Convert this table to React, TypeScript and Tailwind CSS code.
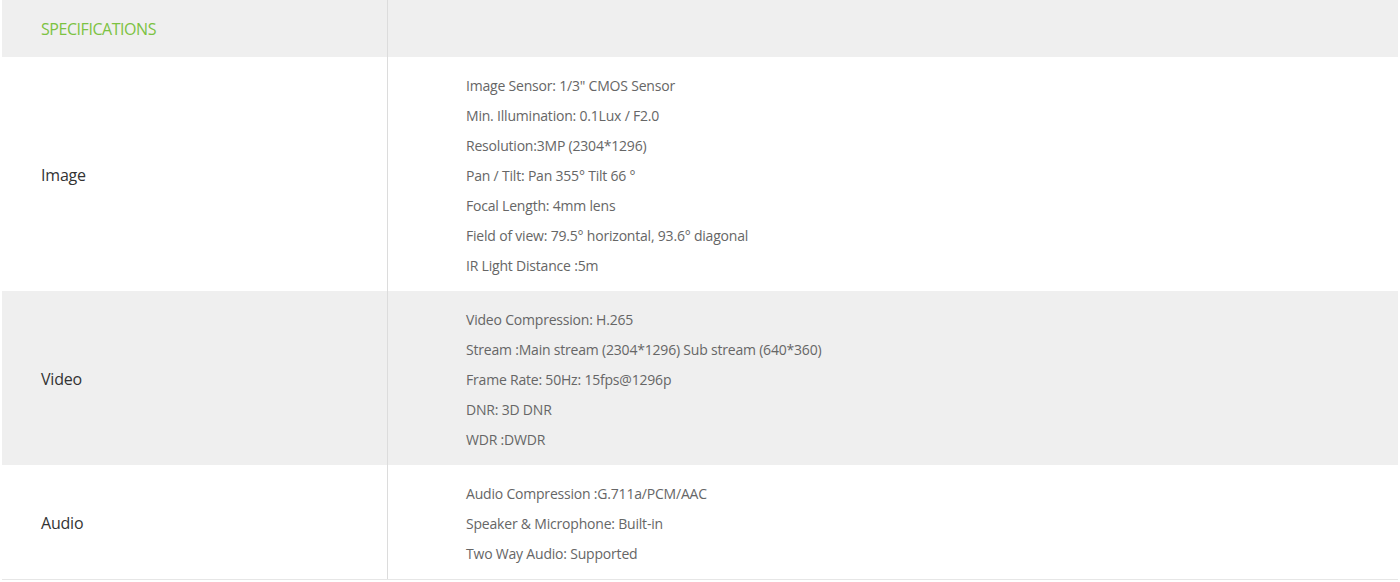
import React from 'react';

interface ISpecRow {
  label: string;
  items: string[];
  shaded: boolean;
}

const rows: ISpecRow[] = [
  {
    label: 'Image',
    shaded: false,
    items: [
      'Image Sensor: 1/3" CMOS Sensor',
      'Min. Illumination: 0.1Lux / F2.0',
      'Resolution:3MP (2304*1296)',
      'Pan / Tilt: Pan 355° Tilt 66 °',
      'Focal Length: 4mm lens',
      'Field of view: 79.5° horizontal, 93.6° diagonal',
      'IR Light Distance :5m',
    ],
  },
  {
    label: 'Video',
    shaded: true,
    items: [
      'Video Compression: H.265',
      'Stream :Main stream (2304*1296) Sub stream (640*360)',
      'Frame Rate: 50Hz: 15fps@1296p',
      'DNR: 3D DNR',
      'WDR :DWDR',
    ],
  },
  {
    label: 'Audio',
    shaded: false,
    items: ['Audio Compression :G.711a/PCM/AAC', 'Speaker & Microphone: Built-in', 'Two Way Audio: Supported'],
  },
];

const App: React.FC = () => {
  return (
    <main
      className="w-[1400px] h-[582px] bg-white pl-[2px] pr-[2px]"
      style={{ fontFamily: '"Open Sans", "Noto Sans", sans-serif' }}
    >
      <section className="w-full border-b border-b-[#e6e6e6]">
        {/* header */}
        <div className="flex h-[57px] bg-[#efefef]">
          <div className="w-[386px] flex items-center pl-[39px] border-r border-r-[#dcdcdc]">
            <span className="text-[16px] tracking-[-0.45px] text-[#7cc242]">SPECIFICATIONS</span>
          </div>
          <div className="flex-1"></div>
        </div>
        {rows.map((row) => (
          <div key={row.label} className={`flex ${row.shaded ? 'bg-[#efefef]' : 'bg-white'}`}>
            <div className="w-[386px] flex items-center pl-[39px] pt-[1px] border-r border-r-[#dcdcdc]">
              <span className="text-[16px] tracking-[-0.2px] text-[#333333]">{row.label}</span>
            </div>
            <ul className="flex-1 pt-[14px] pb-[10px] pl-[78px]">
              {row.items.map((item, index) => (
                <li key={`${row.label}-${index}`} className="h-[30px] leading-[30px] text-[14px] tracking-[-0.2px] text-[#666666]">
                  {item}
                </li>
              ))}
            </ul>
          </div>
        ))}
      </section>
    </main>
  );
};

export default App;
